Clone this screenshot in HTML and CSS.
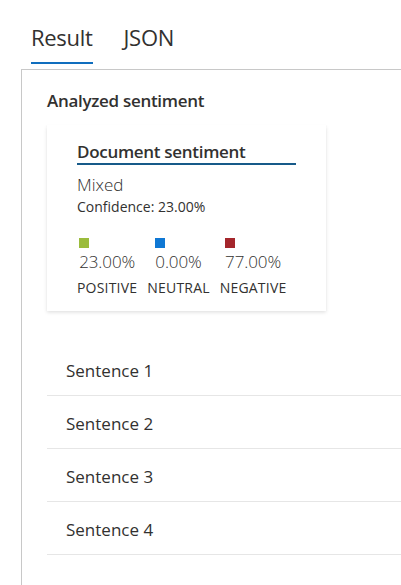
FILE: index.html
```html
<!DOCTYPE html>
<html>
<head>
<meta charset="utf-8">
<link rel="stylesheet" href="styles.css">
</head>
<body>
<div class="tabs">
  <div class="tab active">Result</div>
  <div class="tab">JSON</div>
</div>
<div class="panel">
  <div class="section-title">Analyzed sentiment</div>
  <div class="card">
    <div class="card-title">Document sentiment</div>
    <div class="overall">Mixed</div>
    <div class="confidence">Confidence: 23.00%</div>
    <div class="scores">
      <div class="score">
        <div class="score-top">
          <span class="swatch positive"></span>
          <span class="pct">23.00%</span>
        </div>
        <span class="label">POSITIVE</span>
      </div>
      <div class="score">
        <div class="score-top">
          <span class="swatch neutral"></span>
          <span class="pct">0.00%</span>
        </div>
        <span class="label">NEUTRAL</span>
      </div>
      <div class="score">
        <div class="score-top">
          <span class="swatch negative"></span>
          <span class="pct">77.00%</span>
        </div>
        <span class="label">NEGATIVE</span>
      </div>
    </div>
  </div>
  <div class="sentences">
    <div class="sentence">Sentence 1</div>
    <div class="sentence">Sentence 2</div>
    <div class="sentence">Sentence 3</div>
    <div class="sentence">Sentence 4</div>
  </div>
</div>
</body>
</html>
```
FILE: styles.css
```css
html, body {
  margin: 0;
  padding: 0;
  background: #ffffff;
}
body {
  font-family: "Open Sans", "Noto Sans", sans-serif;
  color: #323130;
  width: 401px;
  height: 585px;
  overflow: hidden;
}
.tabs {
  display: flex;
  align-items: flex-start;
  gap: 31px;
  padding: 22px 0 0 31px;
  height: 69px;
  box-sizing: border-box;
}
.tab {
  font-size: 22px;
  line-height: 30px;
  padding-bottom: 10px;
  color: #323130;
  letter-spacing: -0.3px;
}
.tab.active {
  border-bottom: 2px solid #106ebe;
}
.panel {
  margin-left: 21px;
  border-top: 1px solid #c8c8c8;
  border-left: 1px solid #c8c8c8;
  padding: 19px 0 0 25px;
  height: 540px;
  box-sizing: border-box;
}
.section-title {
  font-size: 17px;
  font-weight: 600;
  line-height: 24px;
  letter-spacing: -0.3px;
}
.card {
  margin-top: 12px;
  width: 279px;
  height: 186px;
  box-sizing: border-box;
  padding: 15px 30px 0 30px;
  box-shadow: 0 1.6px 3.6px rgba(0,0,0,0.13), 0 0.3px 0.9px rgba(0,0,0,0.11);
}
.card-title {
  font-size: 17px;
  font-weight: 600;
  line-height: 23px;
  border-bottom: 2px solid #175a89;
  letter-spacing: -0.3px;
}
.overall {
  margin-top: 9px;
  font-size: 17px;
  line-height: 22px;
  font-weight: 300;
}
.confidence {
  margin-top: 1px;
  font-size: 14px;
  line-height: 19px;
}
.scores {
  display: flex;
  gap: 10px;
  margin-top: 22px;
}
.score {
  display: flex;
  flex-direction: column;
  align-items: center;
}
.score-top {
  display: flex;
  flex-direction: column;
  align-items: flex-start;
}
.swatch {
  width: 10px;
  height: 10px;
  display: block;
}
.swatch.positive { background: #9bbc3c; }
.swatch.neutral { background: #0f78d4; }
.swatch.negative { background: #a4262c; }
.pct {
  font-size: 17px;
  font-weight: 300;
  line-height: 27px;
  letter-spacing: -0.1px;
}
.label {
  margin-top: 3px;
  font-size: 14px;
  font-weight: 400;
  line-height: 19px;
  letter-spacing: 0.2px;
}
.sentences {
  margin-top: 32px;
}
.sentence {
  height: 53px;
  box-sizing: border-box;
  border-bottom: 1px solid #e6e6e6;
  padding: 16px 0 0 19px;
  font-size: 17px;
  line-height: 24px;
  font-weight: 400;
}
```
